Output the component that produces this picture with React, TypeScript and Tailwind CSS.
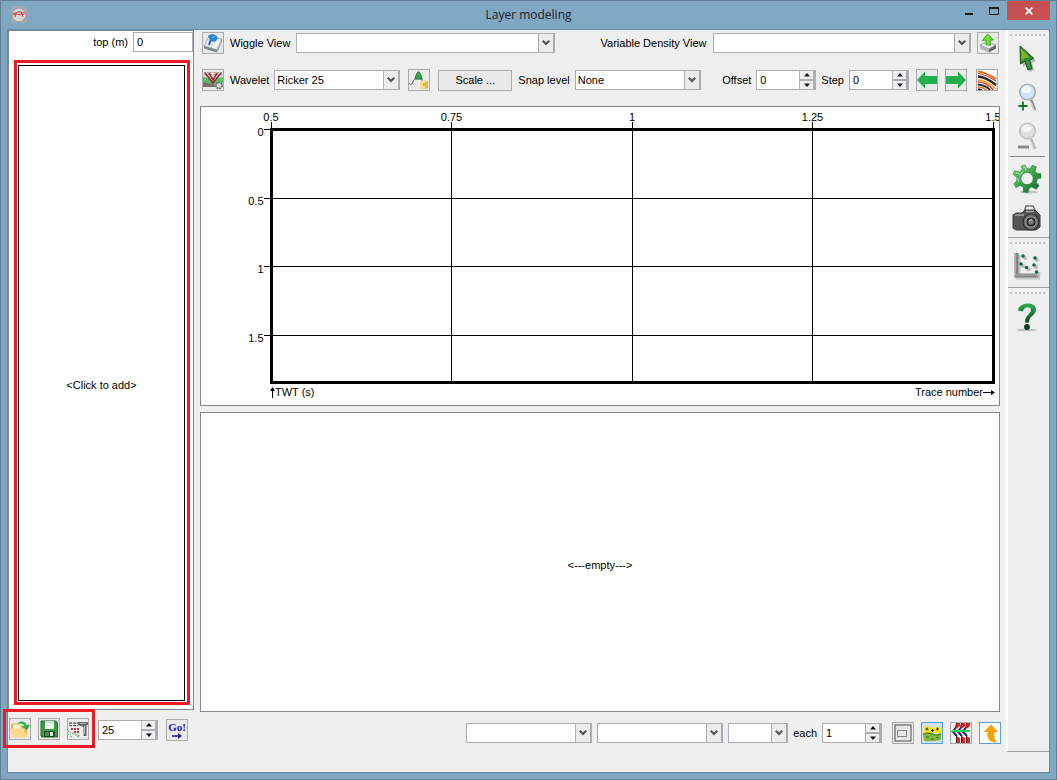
import React, { useId, useState } from "react";

type IconButtonProps = {
  label: string;
  children: React.ReactNode;
  active?: boolean;
};

function IconButton({ label, children, active = false }: IconButtonProps) {
  return (
    <button
      type="button"
      aria-label={label}
      className={
        active
          ? "flex size-[22px] shrink-0 items-center justify-center border border-[#569de5] bg-[#cfe4f8]"
          : "flex size-[22px] shrink-0 items-center justify-center border border-[#acacac] bg-[#eaeaea]"
      }
    >
      {children}
    </button>
  );
}

type ComboProps = { label: string; options?: string[]; className: string };

function Combo({ label, options = [""], className }: ComboProps) {
  return (
    <div className={`relative h-5 ${className}`}>
      <select
        aria-label={label}
        className="block h-full w-full appearance-none rounded-none border border-[#abadb3] bg-white pr-5 pl-0.5 text-[11px] outline-none"
      >
        {options.map((o) => (
          <option key={o}>{o}</option>
        ))}
      </select>
      <span className="pointer-events-none absolute inset-y-0 right-0 flex w-[17px] items-center justify-center border border-r-2 border-[#abadb3] bg-[#ececec]">
        <svg width="8" height="6" viewBox="0 0 8 6">
          <path d="M0.8 0.8 L4 4 L7.2 0.8" fill="none" stroke="#555" strokeWidth="2.2" />
        </svg>
      </span>
    </div>
  );
}

type SpinnerProps = { label?: string; initial: number; name: string };

function Spinner({ label, initial, name }: SpinnerProps) {
  const id = useId();
  const [value, setValue] = useState(String(initial));
  const step = (d: number) => setValue(String((Number(value) || 0) + d));
  return (
    <div className="flex items-center gap-[5px]">
      {label && <label htmlFor={id}>{label}</label>}
      <div className="flex h-5 w-[60px] border border-[#abadb3] bg-white">
        <input
          id={id}
          aria-label={label ? undefined : name}
          value={value}
          onChange={(e) => setValue(e.target.value)}
          className="w-0 min-w-0 flex-1 bg-transparent pl-[3px] text-[11px] outline-none"
        />
        <div className="flex w-4 flex-col border-r border-[#abadb3]">
          <button
            type="button"
            aria-label={`Increase ${name}`}
            onClick={() => step(1)}
            className="flex flex-1 items-center justify-center border border-t-0 border-[#abadb3] bg-[#f0f0f0]"
          >
            <svg width="6" height="4" viewBox="0 0 6 4">
              <path d="M3 0 L6 3.5 H0 Z" fill="#111" />
            </svg>
          </button>
          <button
            type="button"
            aria-label={`Decrease ${name}`}
            onClick={() => step(-1)}
            className="flex flex-1 items-center justify-center border border-b-0 border-[#abadb3] bg-[#f0f0f0]"
          >
            <svg width="6" height="4" viewBox="0 0 6 4">
              <path d="M3 4 L6 0.5 H0 Z" fill="#111" />
            </svg>
          </button>
        </div>
      </div>
    </div>
  );
}

const AppIcon = () => (
  <svg width="16" height="16" viewBox="0 0 16 16">
    <rect width="16" height="16" rx="3" fill="#a3acb4" />
    <circle cx="8" cy="8" r="7" fill="#d8d8d8" stroke="#8d8580" strokeWidth="0.8" />
    <path d="M2 6.5 L6 5.5 L8 4.5 L11 5.5 L14 6 M2 8 L5 7 L8 7.5 L13 7.5 M4 10 L5 6.5 M12 10 L10.5 6" fill="none" stroke="#e03434" strokeWidth="1" />
  </svg>
);

const PropertiesIcon = () => (
  <svg width="20" height="20" viewBox="0 0 20 20">
    <path d="M1 13 L6 3 L19 6 L14 17 Z" fill="#e2e7ea" stroke="#949ca2" strokeWidth="0.8" />
    <path d="M1 13 L14 17 L14 19.5 L1 15.5 Z" fill="#7d868c" />
    <path d="M14 17 L19 6 V9 L15 19 Z" fill="#a9b1b6" />
    <path d="M11 15 L16 7" stroke="#fff" strokeWidth="2" />
    <path d="M6 12 L9 3" stroke="#1766ae" strokeWidth="2" />
    <path d="M5 3 C8 0 14 1 14.5 5 C14 9 10 10 7 7 Z" fill="#2384dc" />
    <path d="M9 5 L12 3.5" stroke="#8ec6f5" />
  </svg>
);

const WiggleIcon = () => (
  <svg width="20" height="20" viewBox="0 0 20 20">
    <rect y="2" width="20" height="15" fill="#dcdad8" />
    <path d="M0 7 L7 8 L10 14 L14 8 L20 7 V13 L11 15 L0 13 Z" fill="#58c06a" />
    <path d="M0 12 L11 14 L13 17 H0 Z" fill="#78736e" />
    <path d="M2 3 L10 13 L18 3 M6 3 L10 10 L14 3" fill="none" stroke="#972a2e" strokeWidth="1.6" />
    <path d="M2 2 V5 M5 2 V6 M8 2 V7 M12 2 V7 M15 2 V6 M18 2 V5" stroke="#8f5b56" strokeDasharray="1 1" />
    <circle cx="16" cy="15.5" r="3" fill="#e4e4e4" stroke="#6b706f" strokeWidth="1.8" strokeDasharray="2 .6" />
  </svg>
);

const WaveletIcon = () => (
  <svg width="20" height="20" viewBox="0 0 20 20">
    <path d="M6 9 C7 6 7.5 2 9.5 2 C11.5 2 12 6 13 9 Z" fill="#2fa74a" stroke="#1a6c2f" />
    <path d="M0 13 C1 15 3 15 4 12 C5 9 5 10 6 9 M13 9 C13 11 13.5 12 14 12" fill="none" stroke="#555" />
    <path d="M11 12 L14 10 L19 11 V18 L14 19 L11 17 Z" fill="#f5dc88" />
    <path d="M16 12 L19 11 V18 L16 19 Z" fill="#e3b94c" />
    <path d="M15 13 V16" stroke="#b78a2d" />
  </svg>
);

const ExportIcon = () => (
  <svg width="20" height="20" viewBox="0 0 20 20">
    <path d="M2 12 L9 9 L18 12 L11 16 Z" fill="#f3f3f3" stroke="#9d9d9d" />
    <path d="M2 12 L11 16 V19.5 L2 15.5 Z" fill="#b4b6b8" />
    <path d="M11 16 L18 12 V15.5 L11 19.5 Z" fill="#686b6e" />
    <path d="M8 12 V7 L4.5 7.5 L9.5 1 L15.5 7 L12 7 L12.5 12 Z" fill="#6ce438" stroke="#38a51d" />
  </svg>
);

const ArrowIcon = ({ right = false }: { right?: boolean }) => (
  <svg width="20" height="20" viewBox="0 0 20 20">
    {right ? (
      <path d="M0 6 H12 V1.5 L20 10 L12 18.5 V14 H0 Z" fill="#22b14c" />
    ) : (
      <path d="M20 6 H8 V1.5 L0 10 L8 18.5 V14 H20 Z" fill="#22b14c" />
    )}
  </svg>
);

const FlattenIcon = () => (
  <svg width="20" height="20" viewBox="0 0 20 20">
    <rect x="1" width="18" height="20" fill="#fff" />
    <g fill="none" strokeWidth="2">
      <path d="M1 1.5 C8 2 14 6 19 9" stroke="#e4701d" />
      <path d="M1 3.5 C8 4 14 8 19 11" stroke="#c73a1b" strokeWidth="1.2" />
      <path d="M1 6.5 C8 7 14 11 19 15" stroke="#282624" strokeWidth="2.4" />
      <path d="M1 10 C8 10 14 14 19 19" stroke="#f0a02c" strokeWidth="1.6" />
      <path d="M1 11.8 C7 12 12 15 16.5 20" stroke="#d3481b" strokeWidth="1.6" />
      <path d="M1 14.5 C6 15 10 16.5 13 20" stroke="#282624" strokeWidth="2.2" />
      <path d="M1 17 C5 17 7 18 9.5 20" stroke="#e4701d" strokeWidth="1.6" />
      <path d="M1 19.2 L5 20" stroke="#282624" />
    </g>
  </svg>
);

const OpenIcon = () => (
  <svg width="20" height="20" viewBox="0 0 20 20">
    <path d="M1 7 L2 4.5 H8 L9 6.5 H17 V18 H2 Z" fill="#dcb45c" />
    <path d="M3 5.5 H11 V10 H3 Z" fill="#fff1c4" />
    <path d="M0 9.5 H14 L17 17 L15 18.5 H2 Z" fill="#fbd98a" />
    <path d="M7 5 C10 1 16 2 16.5 6 L20 5.5 L17 11 L12 7.5 L14.5 6.8 C13 4 10 4 7 5 Z" fill="#2eb145" />
  </svg>
);

const SaveIcon = () => (
  <svg width="20" height="20" viewBox="0 0 20 20">
    <path d="M2 2 H17 L18.5 4 V18 H3 L2 17 Z" fill="#3d9a47" stroke="#23672c" />
    <rect x="6" y="2" width="9" height="8" fill="#edf4ee" />
    <path d="M6 2 H15 V4 H6 Z" fill="#cedad2" />
    <rect x="5" y="12" width="11" height="6" fill="#1c4928" />
    <rect x="11" y="13" width="3" height="4" fill="#e5e9e5" />
    <rect x="6" y="13" width="4" height="4" fill="#418d50" />
  </svg>
);

const StorageIcon = () => (
  <svg width="20" height="20" viewBox="0 0 20 20">
    <rect y="2" width="20" height="16" fill="#f0f0ef" />
    <path d="M1 4 H11 M1 6.5 H10" stroke="#666" strokeWidth="1.5" strokeDasharray="3 1" />
    <path d="M3 10 H11 M6 13 H11" stroke="#bf3438" strokeWidth="1.8" strokeDasharray="2 1" />
    <path d="M0 12 L3 14 M0 15 L4 18 M4 14 L11 18 M7 15 L12 17" stroke="#54aa69" strokeDasharray="2 1" />
    <path d="M10 3 H20 V6 H18.5 V17 H15.5 V8 L10 6 Z" fill="#66696b" />
    <path d="M12 4.5 H18 M16.5 7 V15" stroke="#aeb2b5" />
  </svg>
);

const GoIcon = () => (
  <span className="flex flex-col items-center font-['Liberation_Serif',serif] text-[11px] leading-[11px] font-bold text-[#2020d8]">
    Go!
    <svg width="10" height="6" viewBox="0 0 10 6">
      <path d="M0 3 H7" stroke="#27278a" strokeWidth="1.6" />
      <path d="M6 0 L10 3 L6 6 Z" fill="#27278a" />
    </svg>
  </span>
);

const ZoomBoxIcon = () => (
  <svg width="20" height="20" viewBox="0 0 20 20">
    <rect x="2" y="2" width="16" height="16" fill="#e8e8e8" stroke="#666" strokeWidth="1.2" />
    <rect x="4.5" y="7.5" width="9" height="6" fill="none" stroke="#222" strokeDasharray="1 1" />
  </svg>
);

const FluidIcon = () => (
  <svg width="20" height="20" viewBox="0 0 20 20">
    <path d="M2 4 Q5 2.5 8 4 T19 4 V10 H2 Z" fill="#f3e31c" />
    <path d="M1 11 Q6 8.5 10 10.5 T19 10.5 V17 Q10 19 2 18 Z" fill="#84b93a" />
    <path d="M1 11.5 Q6 9 10 11 T19 11" fill="none" stroke="#56881f" strokeWidth="1.4" />
    <path d="M3.5 6 H6.5 M5 4.5 V7.5 M9 7.5 H12 M10.5 6 V9 M14 6 H17 M15.5 4.5 V7.5" stroke="#333" strokeWidth="1.1" />
    <path d="M4 14 H7 M9 16 H12 M14 14.5 H17" stroke="#4b5f24" strokeWidth="1.2" />
  </svg>
);

const SynthIcon = () => (
  <svg width="20" height="20" viewBox="0 0 20 20">
    <rect x="1" width="18" height="20" fill="#f4f4f4" />
    {[0, 5, 10].map((x) => (
      <g key={x} transform={`translate(${x} 0)`}>
        <path d="M5.5 0 H9 V3 L6 5.5 H4.5 Z" fill="#ed1c24" />
        <path d="M5.5 13 L9 15 V20 H5.5 Z" fill="#ed1c24" />
        <path d="M4.5 5 L2.5 8.5 L6 13" fill="none" stroke="#2730a3" strokeWidth="1.8" />
        <path d="M5.5 0 L4.5 5 L1 8.5 L5.5 13.5 V20" fill="none" stroke="#111" strokeWidth="0.9" />
      </g>
    ))}
    <path d="M1 8 H19" stroke="#22cb51" strokeWidth="2" />
  </svg>
);

const UpIcon = () => (
  <svg width="20" height="20" viewBox="0 0 20 20">
    <rect width="20" height="20" fill="#fff" />
    <path d="M11 1.5 L18.5 9 H14.5 C14 14 14.5 17 17 20 C9 19 6.5 15 7.5 9 H3.5 Z" fill="#f5a40b" />
  </svg>
);

const PointerIcon = () => (
  <svg width="20" height="28" viewBox="0 0 20 28">
    <path d="M5 4 L6 22 L10 19 L13 27 L17 25 L15 18 L19 16 Z" fill="#888" opacity=".6" />
    <path d="M3 1 L3.5 19 L8 16 L11 25 L15 23.5 L12.5 15 L17 13.5 Z" fill="#2f8a2c" stroke="#1d4f1d" />
    <path d="M4 3 L4.5 16 L8 13 L13 12.5 Z" fill="#79b52c" />
    <path d="M10 16 L12.5 22.5" stroke="#2f9e5c" strokeWidth="2" />
  </svg>
);

const MagnifierIcon = ({ plus = false }: { plus?: boolean }) => (
  <svg width="20" height="30" viewBox="0 0 20 30">
    <path d="M14 17 L18 27" stroke={plus ? "#8d9092" : "#b5b5b5"} strokeWidth="2.8" />
    <path d="M13.5 18 L17.5 27.5" stroke="#d6d6d6" />
    <circle cx="10.5" cy="9" r="7.8" fill={plus ? "#d6e3f6" : "#e0e0e0"} stroke={plus ? "#aaacb0" : "#c0c0c0"} strokeWidth="1.6" />
    <ellipse cx="9.5" cy="6.5" rx="5" ry="3.8" fill="#fff" opacity=".6" />
    {plus ? (
      <path d="M1.5 23 H10.5 M6 18.5 V27.5" stroke="#137334" strokeWidth="1.8" />
    ) : (
      <path d="M1 25 H12" stroke="#8a8a8a" strokeWidth="3" />
    )}
  </svg>
);

const GearIcon = () => (
  <svg width="28" height="30" viewBox="0 0 30 32">
    <defs>
      <linearGradient id="gear" x2="1" y2="1">
        <stop stopColor="#7fd184" />
        <stop offset=".5" stopColor="#3ba34b" />
        <stop offset="1" stopColor="#0f5a24" />
      </linearGradient>
    </defs>
    <ellipse cx="17" cy="30" rx="10" ry="1.5" fill="#bdbdbd" />
    <path fillRule="evenodd" fill="url(#gear)" stroke="#207b35" strokeWidth=".6" d="M9 2 L13 1 L15 5 L18 5 L21 1 L25 3 L23.500 8 L26 10 L30 10 L30 15 L26 16 L25 20 L28 23 L25 27 L20 24.500 L17.500 26 L16 30.500 L11 30 L11 25 L8 23 L3 25 L1 21 L4 18 L4 14 L0 11 L2 7 L7 8.500 L10 6 Z M15 9 A6.500 6.500 0 1 0 15.100 9 Z" />
    <path d="M11 3 L13 3 L14 7 M3 9 L8 11 L11 8 M5 15 L6 19" fill="none" stroke="#c0eec5" />
  </svg>
);

const CameraIcon = () => (
  <svg width="30" height="28" viewBox="0 0 30 28">
    <path d="M12 8 L14 2 H21 L24 8" fill="#eee" stroke="#777" strokeWidth="1.6" />
    <path d="M1 11 L4 9 H10 L13 6 H23 L28 11 V23 L24 26 H4 L1 24 Z" fill="#555" stroke="#3a3a3a" />
    <path d="M3 11 H12 M14 7.500 H22" stroke="#a2a2a2" strokeWidth="1.6" />
    <circle cx="19" cy="18" r="8" fill="#6d6d6d" stroke="#2c2c2c" strokeWidth="1.2" />
    <circle cx="19" cy="18" r="5.2" fill="#2c2c2c" stroke="#a0a0a0" />
    <circle cx="19" cy="18" r="2.8" fill="#777b7e" />
    <path d="M17 17 L20 15" stroke="#ddd" />
  </svg>
);

const CrossplotIcon = () => (
  <svg width="28" height="28" viewBox="0 0 28 28">
    <path d="M5 3 V25 H27" fill="none" stroke="#c4c4c4" strokeWidth="5" />
    <path d="M3.500 1 V23.500 H25" fill="none" stroke="#858585" strokeWidth="4" />
    <path d="M2.500 1 V23 H25" fill="none" stroke="#a9a9a9" />
    {[[10, 4], [22, 6], [8, 12], [21, 13], [13.5, 15.5], [23.5, 20]].map(([x, y]) => (
      <g key={`${x}-${y}`}>
        <circle cx={x + 2} cy={y + 2} r="2" fill="#bdbdbd" />
        <circle cx={x} cy={y} r="1.8" fill="#0d6b3c" />
      </g>
    ))}
  </svg>
);

const HelpIcon = () => (
  <svg width="24" height="30" viewBox="0 0 24 30">
    <defs>
      <linearGradient id="help" x2="0" y2="1">
        <stop stopColor="#2fb04e" />
        <stop offset="1" stopColor="#0d4826" />
      </linearGradient>
    </defs>
    <ellipse cx="12" cy="28" rx="10.5" ry="1.3" fill="#c1c1c1" />
    <path d="M3 8.500 C4 -0.500 21 -0.500 21 7.500 C21 13.500 14 13.500 14 20.500 H10 C10 13 16 12 16 8 C16 4 9 4 8 9.500 Z" fill="url(#help)" />
    <circle cx="12" cy="25" r="2.9" fill="#103d22" />
  </svg>
);

function Grip() {
  return <div className="mr-1 ml-0.5 h-[3px] border-t-2 border-dotted border-[#c4c4c4]" />;
}

function ToolButton({ label, children }: { label: string; children: React.ReactNode }) {
  return (
    <button type="button" aria-label={label} className="flex h-[39px] w-full items-center justify-center pr-1">
      {children}
    </button>
  );
}

const TRACES = [
  { label: "0.5", at: "0%" },
  { label: "0.75", at: "25%" },
  { label: "1", at: "50%" },
  { label: "1.25", at: "75%" },
  { label: "1.5", at: "100%" },
];

const TIMES = [
  { label: "0", at: "0%" },
  { label: "0.5", at: "27.1%" },
  { label: "1", at: "54.2%" },
  { label: "1.5", at: "81.3%" },
];

function SeismicChart() {
  return (
    <svg className="block h-full w-full overflow-visible" fontSize="11">
      <svg x="1.5" y="1.5" className="h-[calc(100%-3px)] w-[calc(100%-3px)] overflow-visible">
        <rect width="100%" height="100%" fill="none" stroke="#000" strokeWidth="3" />
        {TRACES.map((t) => (
          <svg key={t.label} x={t.at} className="overflow-visible">
            <line x1="-0.5" x2="-0.5" y1="-8" y2="100%" stroke="#000" shapeRendering="crispEdges" />
            <text x="-0.5" y="-8.5" textAnchor="middle">{t.label}</text>
          </svg>
        ))}
        {TIMES.map((t) => (
          <svg key={t.label} y={t.at} className="overflow-visible">
            <line x1="-8" x2="100%" y1="0" y2="0" stroke="#000" shapeRendering="crispEdges" />
            <text x="-8" y="6.5" textAnchor="end">{t.label}</text>
          </svg>
        ))}
      </svg>
    </svg>
  );
}

export default function App() {
  const [top, setTop] = useState("0");
  return (
    <div className="flex min-h-screen flex-col border border-[#607f95] bg-[#81a8c2] px-1.5 pb-1.5 font-['Liberation_Sans',Arial,sans-serif] text-[11px] text-black">
      <header className="relative flex h-7 items-center justify-center">
        <span className="absolute left-1 top-1.5">
          <AppIcon />
        </span>
        <h1 className="font-['Open_Sans',sans-serif] text-[12px] text-[#1c1c1c]">Layer modeling</h1>
        <div className="absolute top-0 right-0 flex h-[19px]">
          <button type="button" aria-label="Minimize" className="flex w-6 items-center justify-center">
            <svg width="10" height="14" viewBox="0 0 10 14">
              <path d="M1 10 H9" stroke="#1a1a1a" strokeWidth="2" />
            </svg>
          </button>
          <button type="button" aria-label="Maximize" className="flex w-[26px] items-center justify-center">
            <svg width="10" height="8" viewBox="0 0 10 8">
              <path d="M0.5 1 V7.5 H9.5 V1" fill="none" stroke="#1a1a1a" />
              <path d="M0 1 H10" stroke="#1a1a1a" strokeWidth="2" />
            </svg>
          </button>
          <button type="button" aria-label="Close" className="flex w-[43px] items-center justify-center bg-[#c75050]">
            <svg width="8" height="8" viewBox="0 0 8 8">
              <path d="M0.7 0.7 L7.3 7.3 M7.3 0.7 L0.7 7.3" stroke="#fff" strokeWidth="1.8" />
            </svg>
          </button>
        </div>
      </header>

      <div className="flex flex-1 border border-[#6688a0] bg-[#efefef]">
        <section className="flex w-[186px] shrink-0 flex-col">
          <div className="flex flex-1 flex-col border border-[#828790] bg-white">
            <div className="flex items-center justify-end gap-[5px] pt-px">
              <label htmlFor="top-depth">top (m)</label>
              <input
                id="top-depth"
                value={top}
                onChange={(e) => setTop(e.target.value)}
                className="h-5 w-[60px] border border-[#abadb3] bg-white px-[3px] text-[11px] outline-none"
              />
            </div>
            <div className="mt-2 mr-[3px] mb-1 ml-[5px] flex flex-1 border-[3px] border-[#ed1c24] pt-0.5 pr-0.5 pb-px pl-px">
              <button type="button" className="flex flex-1 items-center justify-center border border-black bg-white pt-1">
                &lt;Click to add&gt;
              </button>
            </div>
          </div>
          <div className="flex h-[62px] items-start pt-2 pl-px">
            <div className="relative flex gap-[7px]">
              <IconButton label="Open"><OpenIcon /></IconButton>
              <IconButton label="Save"><SaveIcon /></IconButton>
              <IconButton label="Layer storage"><StorageIcon /></IconButton>
              <span className="pointer-events-none absolute -inset-x-1.5 -top-[9px] -bottom-2 border-[3px] border-[#ed1c24]" />
            </div>
            <div className="ml-[9px] flex items-center gap-2 pt-px">
              <Spinner name="number of models" initial={25} />
              <IconButton label="Generate"><GoIcon /></IconButton>
            </div>
          </div>
        </section>

        <main className="mr-1.5 ml-1.5 flex min-w-0 flex-1 flex-col">
          <div className="flex items-center gap-1.5 pt-0.5 pr-px pl-0.5">
            <IconButton label="Display properties"><PropertiesIcon /></IconButton>
            <span className="w-15 shrink-0 whitespace-nowrap">Wiggle View</span>
            <Combo label="Wiggle View" className="flex-1" />
            <span className="ml-10 shrink-0 whitespace-nowrap">Variable Density View</span>
            <Combo label="Variable Density View" className="flex-1" />
            <IconButton label="Export"><ExportIcon /></IconButton>
          </div>

          <div className="mt-[15px] flex h-[22px] items-center justify-between px-0.5">
            <div className="flex items-center gap-2">
              <div className="flex items-center gap-1.5">
                <IconButton label="Synthetics"><WiggleIcon /></IconButton>
                <div className="flex items-center gap-[5px]">
                  <span>Wavelet</span>
                  <Combo label="Wavelet" options={["Ricker 25"]} className="w-[126px]" />
                </div>
              </div>
              <IconButton label="Select wavelet"><WaveletIcon /></IconButton>
              <div className="flex items-center gap-1.5">
                <button type="button" className="h-[21px] w-[74px] border border-[#acacac] bg-[#e9e9e9]">
                  Scale ...
                </button>
                <div className="flex items-center gap-[5px]">
                  <span className="whitespace-nowrap">Snap level</span>
                  <Combo label="Snap level" options={["None"]} className="w-[126px]" />
                </div>
              </div>
            </div>
            <div className="flex items-center gap-[7px]">
              <div className="flex items-center gap-[5px]">
                <Spinner label="Offset" name="offset" initial={0} />
                <Spinner label="Step" name="step" initial={0} />
              </div>
              <IconButton label="Previous"><ArrowIcon /></IconButton>
              <IconButton label="Next"><ArrowIcon right /></IconButton>
              <span className="ml-0.5 flex">
                <IconButton label="Flatten"><FlattenIcon /></IconButton>
              </span>
            </div>
          </div>

          <div className="mt-[15px] grid flex-1 grid-rows-2 gap-1.5">
            <div className="flex flex-col overflow-hidden border border-[#828790] bg-white pt-[21px] pr-1 pl-[69px]">
              <div className="min-h-0 flex-1">
                <SeismicChart />
              </div>
              <div className="flex h-[21px] items-start justify-between pt-0.5 leading-[13px]">
                <span className="flex items-center">
                  <svg width="5" height="11" viewBox="0 0 5 11">
                    <path d="M2.5 2 V11" stroke="#000" />
                    <path d="M0 4 L2.5 0 L5 4 Z" />
                  </svg>
                  TWT (s)
                </span>
                <span className="flex items-center">
                  Trace number
                  <svg width="12" height="5" viewBox="0 0 12 5">
                    <path d="M0 2.5 H9" stroke="#000" />
                    <path d="M8 0 L12 2.5 L8 5 Z" />
                  </svg>
                </span>
              </div>
            </div>
            <div className="flex items-center justify-center border border-[#828790] bg-white pt-1.5">
              &lt;---empty---&gt;
            </div>
          </div>

          <div className="-mr-px flex h-[60px] items-start justify-end pt-2.5">
            <div className="flex h-[22px] items-center gap-[5px]">
              <Combo label="Layer" className="w-[126px]" />
              <Combo label="Property" className="w-[126px]" />
              <Combo label="Level" className="w-[60px]" />
              <Spinner label="each" name="display step" initial={1} />
            </div>
            <div className="ml-2.5 flex gap-[7px]">
              <IconButton label="Zoom box"><ZoomBoxIcon /></IconButton>
              <IconButton label="Fluid replacement" active><FluidIcon /></IconButton>
              <IconButton label="Synthetic display"><SynthIcon /></IconButton>
              <IconButton label="Move up" active><UpIcon /></IconButton>
            </div>
          </div>
        </main>

        <nav aria-label="Tools" className="mb-5 w-[43px] shrink-0 border-b border-l-2 border-b-[#a0a0a0] border-l-white pt-1">
          <Grip />
          <div className="pt-0.5">
            <ToolButton label="Select"><PointerIcon /></ToolButton>
            <ToolButton label="Zoom in"><MagnifierIcon plus /></ToolButton>
            <ToolButton label="Zoom out"><MagnifierIcon /></ToolButton>
          </div>
          <div className="mr-1 ml-0.5 border-t border-[#858585]" />
          <div className="pt-0.5">
            <ToolButton label="Settings"><GearIcon /></ToolButton>
            <ToolButton label="Snapshot"><CameraIcon /></ToolButton>
          </div>
          <div className="mb-1 border-t border-[#a0a0a0]" />
          <Grip />
          <div className="flex h-[42px] items-center">
            <ToolButton label="Crossplot"><CrossplotIcon /></ToolButton>
          </div>
          <div className="mb-1 border-t border-[#a0a0a0]" />
          <Grip />
          <div className="pt-0.5">
            <ToolButton label="Help"><HelpIcon /></ToolButton>
          </div>
        </nav>
      </div>
    </div>
  );
}
